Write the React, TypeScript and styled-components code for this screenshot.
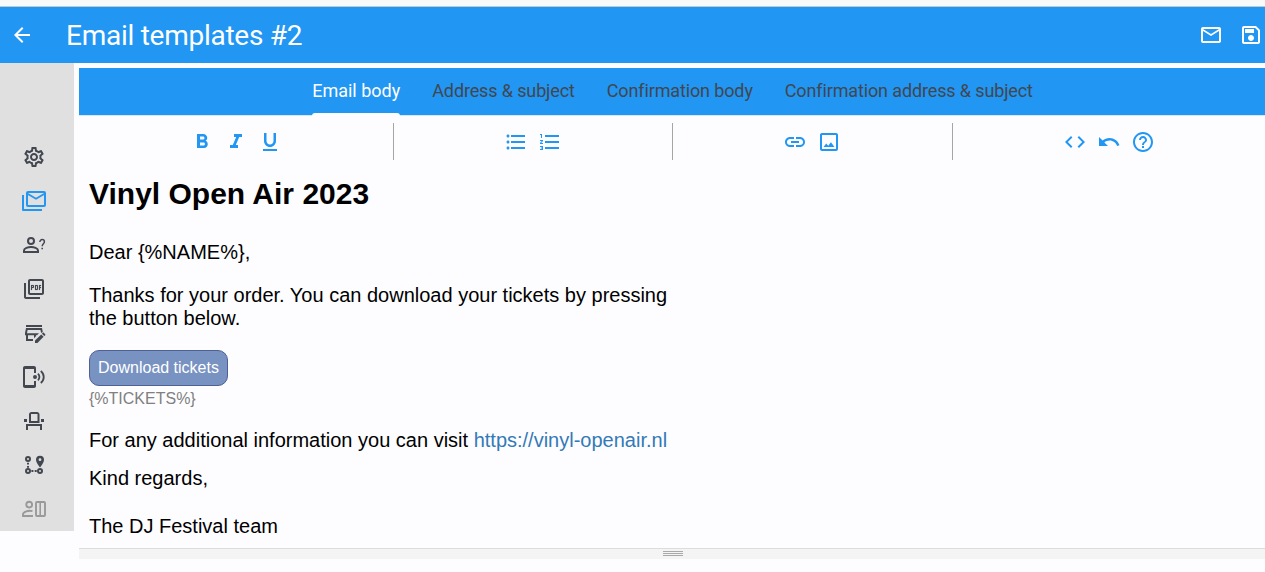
import React from "react";
import styled, { createGlobalStyle } from "styled-components";

const BLUE = "#2196f3";
const INK = "#424750";

const GlobalStyle = createGlobalStyle`
  *, *::before, *::after { box-sizing: border-box; }
  html, body { margin: 0; padding: 0; background: #fdfdff; overflow: hidden; }
  body { font-family: Roboto, sans-serif; }
`;

const Page = styled.div`
  width: 100%;
  height: 572px;
  display: flex;
  flex-direction: column;
  overflow: hidden;
`;

const TopStrip = styled.div`
  flex: none;
  height: 7px;
  background: #fafafa;
  border-bottom: 1px solid #c3c9cd;
`;

const Header = styled.header`
  flex: none;
  height: 56px;
  background: ${BLUE};
  color: #fff;
  display: flex;
  align-items: center;
  padding: 0 2px 0 10px;
`;

const Title = styled.h1`
  margin: 0 0 0 32px;
  padding-top: 2px;
  flex: 1;
  font-size: 28px;
  line-height: 36px;
  font-weight: 400;
  letter-spacing: -0.26px;
  white-space: nowrap;
`;

const HeaderActions = styled.div`
  display: flex;
  gap: 16px;
`;

const Main = styled.div`
  flex: 1;
  min-height: 0;
  display: flex;
  align-items: flex-start;
`;

const Sidebar = styled.nav`
  flex: none;
  width: 74px;
  height: 468px;
  padding: 72px 6px 0 0;
  background: #e0e0e0;
  display: flex;
  flex-direction: column;
  align-items: center;
`;

const NavItem = styled.a<{ $color?: string }>`
  height: 44px;
  display: flex;
  align-items: center;
  color: ${(p) => p.$color ?? INK};
`;

const Editor = styled.section`
  flex: 1;
  min-width: 0;
  margin: 5px -1px 0 5px;
`;

const Tabs = styled.div`
  height: 48px;
  background: ${BLUE};
  border-bottom: 1px solid #d5e6f5;
  display: flex;
  justify-content: center;
  gap: 32px;
`;

const Tab = styled.div<{ $active?: boolean }>`
  position: relative;
  font-size: 18px;
  line-height: 46px;
  font-weight: 400;
  letter-spacing: ${(p) => (p.$active ? "0" : "-0.13px")};
  color: ${(p) => (p.$active ? "#fff" : "#424750")};
  white-space: nowrap;
  &::after {
    content: "";
    display: ${(p) => (p.$active ? "block" : "none")};
    position: absolute;
    left: 0;
    right: 0;
    bottom: -1px;
    height: 3px;
    border-radius: 3px 3px 0 0;
    background: #fdfdff;
  }
`;

const Toolbar = styled.div`
  display: flex;
  height: 44px;
  padding: 7px 1px 0 0;
`;

const ToolGroup = styled.div`
  flex: 1 1 auto;
  height: 37px;
  display: flex;
  align-items: center;
  justify-content: center;
  color: ${BLUE};
  & + & { border-left: 1px solid #a5a5a5; }
  &:first-child { padding-left: 1px; }
`;

const ToolButton = styled.span`
  width: 34px;
  height: 24px;
  display: flex;
  justify-content: center;
`;

const Document = styled.article`
  height: 388px;
  padding: 16px 10px 0;
  font-family: "Liberation Sans", Arial, sans-serif;
  font-size: 20px;
  line-height: 23px;
  color: #000;
`;

const Heading = styled.h2`
  margin: 0 0 29px;
  font-size: 30px;
  line-height: 36px;
  font-weight: 700;
`;

const Paragraph = styled.p<{ $after: number }>`
  margin: 0 0 ${(p) => p.$after}px;
  white-space: nowrap;
`;

const DownloadButton = styled.div`
  width: 139px;
  height: 36px;
  border: 1px solid #4e6096;
  border-radius: 10px;
  background: #7892c2;
  color: #fff;
  font-size: 16px;
  line-height: 34px;
  text-align: center;
  white-space: nowrap;
`;

const Placeholder = styled.div`
  margin: 2px 0 20px;
  font-size: 16px;
  line-height: 21px;
  color: #808080;
`;

const Link = styled.a`
  color: #337ab7;
`;

const ResizeBar = styled.div`
  height: 11px;
  border-top: 1px solid #dddddd;
  background: #f4f4f4;
  display: flex;
  flex-direction: column;
  align-items: center;
  padding-top: 2px;
  gap: 1px;
`;

const Grip = styled.span`
  width: 20px;
  height: 1px;
  background: #a9a9a9;
`;

const Svg = styled.svg`
  display: block;
  flex: none;
`;

type IconProps = { d?: string; size?: number; children?: React.ReactNode };

const Icon = ({ d, size = 24, children }: IconProps) => (
  <Svg width={size} height={size} viewBox="0 0 24 24" fill="currentColor">
    {d && <path d={d} />}
    {children}
  </Svg>
);

const MAIL = "M22 6c0-1.1-.9-2-2-2H4c-1.100 0-2 .9-2 2v12c0 1.100.9 2 2 2h16c1.100 0 2-.9 2-2V6zm-2 0l-8 5-8-5h16zm0 12H4V8l8 5 8-5v10z";

const icons = {
  back: "M20 11H7.830l5.590-5.590L12 4l-8 8 8 8 1.410-1.410L7.830 13H20v-2z",
  save: "M17 3H5c-1.110 0-2 .9-2 2v14c0 1.100.89 2 2 2h14c1.100 0 2-.9 2-2V7l-4-4zm2 16H5V5h11.170L19 7.830V19zm-7-7c-1.660 0-3 1.340-3 3s1.340 3 3 3 3-1.340 3-3-1.340-3-3-3zM6 6h9v4H6z",
  settings:
    "M19.430 12.980c.04-.32.07-.64.07-.98 0-.34-.03-.66-.07-.98l2.110-1.650c.19-.15.24-.42.12-.64l-2-3.460c-.09-.16-.26-.25-.44-.25-.06 0-.12.01-.17.03l-2.490 1c-.52-.4-1.080-.73-1.690-.98l-.38-2.650C14.460 2.180 14.250 2 14 2h-4c-.25 0-.46.18-.49.42l-.38 2.650c-.61.25-1.170.59-1.690.98l-2.490-1c-.06-.02-.12-.03-.18-.03-.17 0-.34.09-.43.25l-2 3.460c-.13.22-.07.49.12.64l2.110 1.650c-.04.32-.07.65-.07.98 0 .33.03.66.07.98l-2.110 1.650c-.19.15-.24.42-.12.64l2 3.460c.09.16.26.25.44.25.06 0 .12-.01.17-.03l2.490-1c.52.4 1.080.73 1.690.98l.38 2.650c.03.24.24.42.49.42h4c.25 0 .46-.18.49-.42l.38-2.650c.61-.25 1.170-.59 1.690-.98l2.490 1c.06.02.12.03.18.03.17 0 .34-.09.43-.25l2-3.460c.12-.22.07-.49-.12-.64l-2.110-1.650zm-1.980-1.710c.04.31.05.52.05.73 0 .21-.02.43-.05.73l-.14 1.130.89.7 1.080.84-.7 1.210-1.270-.51-1.040-.42-.9.68c-.43.32-.84.56-1.250.73l-1.060.43-.16 1.130-.2 1.350h-1.400l-.19-1.350-.16-1.130-1.060-.43c-.43-.18-.83-.41-1.230-.71l-.91-.7-1.060.43-1.270.51-.7-1.210 1.080-.84.89-.7-.14-1.130c-.03-.31-.05-.54-.05-.74s.02-.43.05-.73l.14-1.130-.89-.7-1.080-.84.7-1.210 1.270.51 1.040.42.9-.68c.43-.32.84-.56 1.250-.73l1.060-.43.16-1.130.2-1.350h1.390l.19 1.350.16 1.130 1.060.43c.43.18.83.41 1.230.71l.91.7 1.060-.43 1.270-.51.7 1.210-1.070.85-.89.7.14 1.130zM12 8c-2.210 0-4 1.790-4 4s1.790 4 4 4 4-1.790 4-4-1.790-4-4-4zm0 6c-1.100 0-2-.9-2-2s.9-2 2-2 2 .9 2 2-.9 2-2 2z",
  bold: "M15.600 10.790c.97-.67 1.650-1.770 1.650-2.790 0-2.260-1.750-4-4-4H7v14h7.040c2.090 0 3.710-1.700 3.710-3.790 0-1.520-.86-2.820-2.150-3.420zM10 6.500h3c.83 0 1.500.67 1.500 1.500s-.67 1.500-1.500 1.500h-3v-3zm3.500 9H10v-3h3.500c.83 0 1.500.67 1.500 1.500s-.67 1.500-1.500 1.500z",
  italic: "M10 4v3h2.210l-3.420 8H6v3h8v-3h-2.210l3.420-8H18V4z",
  underline: "M12 17c3.310 0 6-2.690 6-6V3h-2.500v8c0 1.930-1.570 3.500-3.500 3.500S8.500 12.930 8.500 11V3H6v8c0 3.310 2.690 6 6 6zm-7 2v2h14v-2H5z",
  bullets: "M4 10.500c-.83 0-1.500.67-1.500 1.500s.67 1.500 1.500 1.500 1.500-.67 1.500-1.500-.67-1.500-1.500-1.500zm0-6c-.83 0-1.500.67-1.500 1.500S3.170 7.500 4 7.500 5.500 6.830 5.500 6 4.830 4.500 4 4.500zm0 12c-.83 0-1.500.68-1.500 1.500s.68 1.500 1.500 1.500 1.500-.68 1.500-1.500-.67-1.500-1.500-1.500zM7 19h14v-2H7v2zm0-6h14v-2H7v2zm0-8v2h14V5H7z",
  numbers: "M2 17h2v.5H3v1h1v.5H2v1h3v-4H2v1zm1-9h1V4H2v1h1v3zm-1 3h1.800L2 13.100v.9h3v-1H3.200L5 10.900V10H2v1zm5-6v2h14V5H7zm0 14h14v-2H7v2zm0-6h14v-2H7v2z",
  link: "M3.900 12c0-1.710 1.390-3.100 3.100-3.100h4V7H7c-2.760 0-5 2.240-5 5s2.240 5 5 5h4v-1.900H7c-1.710 0-3.100-1.390-3.100-3.100zM8 13h8v-2H8v2zm9-6h-4v1.900h4c1.710 0 3.100 1.390 3.100 3.100s-1.390 3.100-3.100 3.100h-4V17h4c2.760 0 5-2.240 5-5s-2.240-5-5-5z",
  image: "M19 3H5c-1.100 0-2 .9-2 2v14c0 1.100.9 2 2 2h14c1.100 0 2-.9 2-2V5c0-1.100-.9-2-2-2zm0 16H5V5h14v14zM6.500 17h11l-3.540-4.710-2.750 3.540-1.960-2.360z",
  code: "M9.400 16.600L4.800 12l4.600-4.600L8 6l-6 6 6 6 1.400-1.400zm5.200 0l4.600-4.600-4.600-4.600L16 6l6 6-6 6-1.400-1.400z",
  undo: "M12.500 8c-2.650 0-5.050.99-6.900 2.600L2 7v9h9l-3.620-3.620c1.390-1.160 3.160-1.880 5.120-1.880 3.540 0 6.550 2.310 7.600 5.500l2.370-.78C21.080 11.030 17.150 8 12.500 8z",
  help: "M11 18h2v-2h-2v2zm1-16C6.480 2 2 6.480 2 12s4.480 10 10 10 10-4.480 10-10S17.520 2 12 2zm0 18c-4.410 0-8-3.590-8-8s3.590-8 8-8 8 3.590 8 8-3.590 8-8 8zm0-14c-2.210 0-4 1.790-4 4h2c0-1.100.9-2 2-2s2 .9 2 2c0 2-3 1.750-3 5h2c0-2.250 3-2.500 3-5 0-2.210-1.790-4-4-4z",
};

const MailStackIcon = () => (
  <Icon>
    <g fill="none" stroke="currentColor" strokeWidth="2">
      <rect x="5" y="3" width="18" height="14" rx="1" />
      <path d="M5 4.500l9 5.300 9-5.300" strokeWidth="1.800" />
      <path d="M1 6v15h19" strokeLinejoin="round" />
    </g>
  </Icon>
);

const GuestIcon = () => (
  <Icon>
    <g fill="none" stroke="currentColor" strokeWidth="2">
      <circle cx="9" cy="8" r="3" />
      <path d="M2 19v-1.600c0-2.200 4.200-3.400 7-3.400s7 1.200 7 3.400V19z" />
      <path d="M17.900 9c0-1.500 1-2.400 2.300-2.400s2.200.9 2.200 2.200c0 2-2.200 2-2.200 4.400" strokeWidth="1.500" />
    </g>
    <path d="M19.400 14.700h1.600v1.600h-1.600z" />
  </Icon>
);

const PdfIcon = () => (
  <Icon>
    <path d="M20 2H8c-1.100 0-2 .9-2 2v12c0 1.100.9 2 2 2h12c1.100 0 2-.9 2-2V4c0-1.100-.9-2-2-2zm0 14H8V4h12v12zM4 6H2v14c0 1.100.9 2 2 2h14v-2H4V6z" />
    <path
      d="M16 12V9c0-.55-.45-1-1-1h-2v5h2c.55 0 1-.45 1-1zm-2-3h1v3h-1V9zm4 2h1v-1h-1V9h1V8h-2v5h1v-2zm-8 0h1c.55 0 1-.45 1-1V9c0-.55-.45-1-1-1H9v5h1v-2zm0-2h1v1h-1V9z"
      stroke="currentColor"
      strokeWidth=".15"
    />
  </Icon>
);

const ShopEditIcon = () => (
  <Icon>
    <path d="M4 4h16v2H4zM4 7h16l.8 4-1.600 1-.8-3H5.600L5 12.200h12L15 14.200h-1v1l-2 2v-3H6V18h5v2H4v-5.800H3V12z" />
    <path d="M13 22v-2.400l6.200-6.200 2.400 2.400-6.200 6.200zM19.900 12.700l.9-.9c.3-.3.700-.3 1 0l1.400 1.400c.3.300.3.700 0 1l-.9.900z" />
  </Icon>
);

const PhoneIcon = () => (
  <Icon>
    <path d="M3 1h9c1.100 0 2 .9 2 2v5h-2V4H3v16h9v-4h2v5c0 1.100-.9 2-2 2H3c-1.100 0-2-.9-2-2V3c0-1.100.9-2 2-2z" />
    <circle cx="13" cy="12" r="2" />
    <g fill="none" stroke="currentColor" strokeWidth="1.800">
      <path d="M15.900 8.600c2 1.800 2 5 0 6.800M18.800 6c3.900 3.300 3.900 8.700 0 12" />
    </g>
  </Icon>
);

const SeatIcon = () => (
  <Icon>
    <path d="M9.500 3h5.500c1.400 0 2.500 1.100 2.500 2.500V14H7V5.500C7 4.100 8.100 3 9.500 3zM9 5v7h6.500V5zM4 15h16v6h-2v-4H6v4H4zM2 10h3v3H2zM19 10h3v3h-3z" fillRule="evenodd" />
  </Icon>
);

const RouteIcon = () => (
  <Icon>
    <g fill="none" stroke="currentColor" strokeWidth="2">
      <circle cx="6" cy="6" r="2" />
      <circle cx="6" cy="18" r="2" />
      <circle cx="18" cy="18" r="2" />
    </g>
    <path d="M5 9.800h2v1.800H5zM5 13h2v1.800H5zM9.400 17h2v2h-2zM12.700 17h2v2h-2zM18 2.700a4 4 0 0 0-4 4c0 2.900 4 7.800 4 7.800s4-4.900 4-7.800a4 4 0 0 0-4-4zm0 2.600a1.400 1.400 0 1 1 0 2.800 1.400 1.400 0 0 1 0-2.800z" fillRule="evenodd" />
  </Icon>
);

const AttendantIcon = () => (
  <Icon>
    <g fill="none" stroke="currentColor" strokeWidth="1.900">
      <circle cx="7.200" cy="7.600" r="2.900" />
      <path d="M10.500 14.200C6.500 13 1 14.900 1 17.600V19h10" />
      <rect x="14" y="5" width="9" height="14" rx="1" />
      <path d="M18.200 5v14" strokeWidth="1.600" />
    </g>
  </Icon>
);

const toolGroups = [
  [icons.bold, icons.italic, icons.underline],
  [icons.bullets, icons.numbers],
  [icons.link, icons.image],
  [icons.code, icons.undo, icons.help],
];

export default function App() {
  return (
    <Page>
      <GlobalStyle />
      <TopStrip />
      <Header>
        <Icon d={icons.back} />
        <Title>Email templates #2</Title>
        <HeaderActions>
          <Icon d={MAIL} />
          <Icon d={icons.save} />
        </HeaderActions>
      </Header>
      <Main>
        <Sidebar>
          <NavItem><Icon d={icons.settings} /></NavItem>
          <NavItem $color={BLUE}><MailStackIcon /></NavItem>
          <NavItem><GuestIcon /></NavItem>
          <NavItem><PdfIcon /></NavItem>
          <NavItem><ShopEditIcon /></NavItem>
          <NavItem><PhoneIcon /></NavItem>
          <NavItem><SeatIcon /></NavItem>
          <NavItem><RouteIcon /></NavItem>
          <NavItem $color="#999"><AttendantIcon /></NavItem>
        </Sidebar>
        <Editor>
          <Tabs>
            <Tab $active>Email body</Tab>
            <Tab>Address &amp; subject</Tab>
            <Tab>Confirmation body</Tab>
            <Tab>Confirmation address &amp; subject</Tab>
          </Tabs>
          <Toolbar>
            {toolGroups.map((group, i) => (
              <ToolGroup key={i}>
                {group.map((d) => (
                  <ToolButton key={d}><Icon d={d} /></ToolButton>
                ))}
              </ToolGroup>
            ))}
          </Toolbar>
          <Document>
            <Heading>Vinyl Open Air 2023</Heading>
            <Paragraph $after={20}>Dear {"{%NAME%}"},</Paragraph>
            <Paragraph $after={20}>
              Thanks for your order. You can download your tickets by pressing
              <br />
              the button below.
            </Paragraph>
            <DownloadButton>Download tickets</DownloadButton>
            <Placeholder>{"{%TICKETS%}"}</Placeholder>
            <Paragraph $after={15}>
              For any additional information you can visit <Link>https://vinyl-openair.nl</Link>
            </Paragraph>
            <Paragraph $after={25}>Kind regards,</Paragraph>
            <Paragraph $after={0}>The DJ Festival team</Paragraph>
          </Document>
          <ResizeBar>
            <Grip />
            <Grip />
            <Grip />
          </ResizeBar>
        </Editor>
      </Main>
    </Page>
  );
}
